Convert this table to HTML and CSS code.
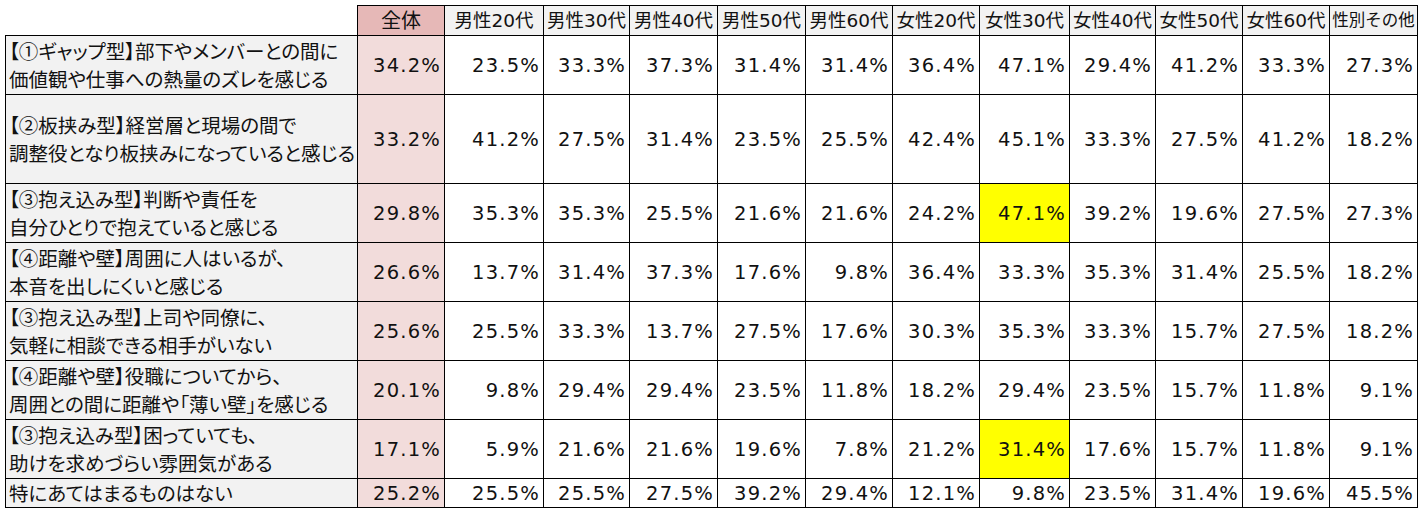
FILE: index.html
```html
<!DOCTYPE html>
<html lang="ja">
<head>
<meta charset="utf-8">
<title>管理職の孤独感 集計表</title>
<link rel="stylesheet" href="styles.css">
</head>
<body>
<table class="grid">
  <colgroup>
    <col class="c-label">
    <col class="c-87">
    <col class="c-99">
    <col class="c-86">
    <col class="c-88">
    <col class="c-88">
    <col class="c-87">
    <col class="c-87">
    <col class="c-90">
    <col class="c-86">
    <col class="c-87">
    <col class="c-87">
    <col class="c-88">
  </colgroup>
  <thead>
    <tr class="r-head">
      <th class="blank"></th>
      <th class="h-total">全体</th>
      <th class="h">男性20代</th>
      <th class="h">男性30代</th>
      <th class="h">男性40代</th>
      <th class="h">男性50代</th>
      <th class="h">男性60代</th>
      <th class="h">女性20代</th>
      <th class="h">女性30代</th>
      <th class="h">女性40代</th>
      <th class="h">女性50代</th>
      <th class="h">女性60代</th>
      <th class="h h-small">性別その他</th>
    </tr>
  </thead>
  <tbody>
    <tr class="r-2">
      <th class="label">【①ギャップ型】部下やメンバーとの間に<br>価値観や仕事への熱量のズレを感じる</th>
      <td class="total">34.2%</td><td>23.5%</td><td>33.3%</td><td>37.3%</td><td>31.4%</td><td>31.4%</td><td>36.4%</td><td>47.1%</td><td>29.4%</td><td>41.2%</td><td>33.3%</td><td>27.3%</td>
    </tr>
    <tr class="r-tall">
      <th class="label">【②板挟み型】経営層と現場の間で<br>調整役となり板挟みになっていると感じる</th>
      <td class="total">33.2%</td><td>41.2%</td><td>27.5%</td><td>31.4%</td><td>23.5%</td><td>25.5%</td><td>42.4%</td><td>45.1%</td><td>33.3%</td><td>27.5%</td><td>41.2%</td><td>18.2%</td>
    </tr>
    <tr class="r-2">
      <th class="label">【③抱え込み型】判断や責任を<br>自分ひとりで抱えていると感じる</th>
      <td class="total">29.8%</td><td>35.3%</td><td>35.3%</td><td>25.5%</td><td>21.6%</td><td>21.6%</td><td>24.2%</td><td class="hl">47.1%</td><td>39.2%</td><td>19.6%</td><td>27.5%</td><td>27.3%</td>
    </tr>
    <tr class="r-2">
      <th class="label">【④距離や壁】周囲に人はいるが、<br>本音を出しにくいと感じる</th>
      <td class="total">26.6%</td><td>13.7%</td><td>31.4%</td><td>37.3%</td><td>17.6%</td><td>9.8%</td><td>36.4%</td><td>33.3%</td><td>35.3%</td><td>31.4%</td><td>25.5%</td><td>18.2%</td>
    </tr>
    <tr class="r-2">
      <th class="label">【③抱え込み型】上司や同僚に、<br>気軽に相談できる相手がいない</th>
      <td class="total">25.6%</td><td>25.5%</td><td>33.3%</td><td>13.7%</td><td>27.5%</td><td>17.6%</td><td>30.3%</td><td>35.3%</td><td>33.3%</td><td>15.7%</td><td>27.5%</td><td>18.2%</td>
    </tr>
    <tr class="r-2">
      <th class="label">【④距離や壁】役職についてから、<br>周囲との間に距離や「薄い壁」を感じる</th>
      <td class="total">20.1%</td><td>9.8%</td><td>29.4%</td><td>29.4%</td><td>23.5%</td><td>11.8%</td><td>18.2%</td><td>29.4%</td><td>23.5%</td><td>15.7%</td><td>11.8%</td><td>9.1%</td>
    </tr>
    <tr class="r-2">
      <th class="label">【③抱え込み型】困っていても、<br>助けを求めづらい雰囲気がある</th>
      <td class="total">17.1%</td><td>5.9%</td><td>21.6%</td><td>21.6%</td><td>19.6%</td><td>7.8%</td><td>21.2%</td><td class="hl">31.4%</td><td>17.6%</td><td>15.7%</td><td>11.8%</td><td>9.1%</td>
    </tr>
    <tr class="r-1">
      <th class="label">特にあてはまるものはない</th>
      <td class="total">25.2%</td><td>25.5%</td><td>25.5%</td><td>27.5%</td><td>39.2%</td><td>29.4%</td><td>12.1%</td><td>9.8%</td><td>23.5%</td><td>31.4%</td><td>19.6%</td><td>45.5%</td>
    </tr>
  </tbody>
</table>
</body>
</html>
```

FILE: styles.css
```css
html, body {
  margin: 0;
  padding: 0;
  background: #ffffff;
}

body {
  padding: 5px 0 0 5px;
  font-family: "DejaVu Sans", "Noto Sans CJK JP", sans-serif;
  color: #111111;
}

.grid {
  border-collapse: collapse;
  table-layout: fixed;
  width: 1413px;
}

.c-label { width: 352px; }
.c-86 { width: 86px; }
.c-87 { width: 87px; }
.c-88 { width: 88px; }
.c-90 { width: 90px; }
.c-99 { width: 99px; }

.grid th,
.grid td {
  border: 1px solid #000000;
  padding: 0;
  vertical-align: middle;
  overflow: hidden;
  white-space: nowrap;
}

.grid th.blank {
  border: none;
  background: #ffffff;
}

.r-head { height: 30px; }
.r-2 { height: 59px; }
.r-tall { height: 89px; }
.r-1 { height: 29px; }

.h,
.h-total {
  font-weight: normal;
  text-align: center;
  font-size: 18.5px;
  line-height: 28px;
  background: #f2f2f2;
}

.h-total {
  background: #e6b8b7;
  font-size: 20px;
}

.h-small {
  font-size: 16.5px;
}

.label {
  font-family: "Noto Sans CJK JP", sans-serif;
  font-feature-settings: "palt";
  font-weight: normal;
  font-size: 19.5px;
  line-height: 28px;
  text-align: left;
  padding-left: 3px !important;
  background: #f2f2f2;
}

.grid td {
  font-size: 19.5px;
  letter-spacing: 1.2px;
  text-align: right;
  padding-right: 3px;
  background: #ffffff;
}

.grid td.total {
  background: #f2dcdb;
}

.grid td.hl {
  background: #ffff00;
}
```
